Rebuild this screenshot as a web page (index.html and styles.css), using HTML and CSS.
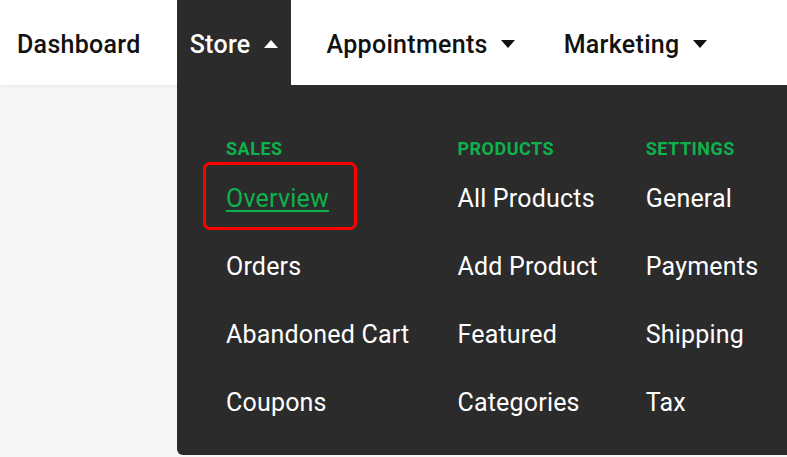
FILE: index.html
```html
<!doctype html>
<html>
<head>
<meta charset="utf-8">
<meta name="viewport" content="width=device-width, initial-scale=1">
<link rel="stylesheet" href="styles.css">
</head>
<body>
<header class="topnav">
    <nav class="topnav__list">
        <a class="topnav__item" href="#">Dashboard</a>
        <a class="topnav__item topnav__item--open" href="#">Store <span class="caret caret--up"></span></a>
        <a class="topnav__item" href="#">Appointments <span class="caret"></span></a>
        <a class="topnav__item" href="#">Marketing <span class="caret"></span></a>
    </nav>
</header>
<div class="dropdown">
    <div class="dropdown__col">
        <div class="dropdown__heading">SALES</div>
        <a class="dropdown__link dropdown__link--current" href="#">Overview</a>
        <a class="dropdown__link" href="#">Orders</a>
        <a class="dropdown__link" href="#">Abandoned Cart</a>
        <a class="dropdown__link" href="#">Coupons</a>
    </div>
    <div class="dropdown__col">
        <div class="dropdown__heading">PRODUCTS</div>
        <a class="dropdown__link" href="#">All Products</a>
        <a class="dropdown__link" href="#">Add Product</a>
        <a class="dropdown__link" href="#">Featured</a>
        <a class="dropdown__link" href="#">Categories</a>
    </div>
    <div class="dropdown__col">
        <div class="dropdown__heading">SETTINGS</div>
        <a class="dropdown__link" href="#">General</a>
        <a class="dropdown__link" href="#">Payments</a>
        <a class="dropdown__link" href="#">Shipping</a>
        <a class="dropdown__link" href="#">Tax</a>
    </div>
</div>
</body>
</html>
```

FILE: styles.css
```css
body {
    font-family: Roboto, "Liberation Sans", sans-serif;
    margin: 0;
    height: 457px;
    overflow: hidden;
    background-color: #f5f6f7;
    position: relative;
}
.topnav {
    height: 85px;
    background-color: white;
    box-shadow: 0 1px 3px rgba(0, 0, 0, 0.08);
    position: relative;
    z-index: 1;
}
.topnav__list {
    display: flex;
    height: 100%;
    padding-left: 4px;
    gap: 23px;
}
.topnav__item {
    display: flex;
    align-items: center;
    gap: 13px;
    padding: 0 13px;
    padding-top: 3px;
    font-size: 25px;
    font-weight: 500;
    letter-spacing: 0.3px;
    color: #111;
    text-decoration: none;
}
.topnav__item--open {
    background-color: #2b2b2b;
    color: white;
}
.caret {
    width: 0;
    height: 0;
    border-left: 7px solid transparent;
    border-right: 7px solid transparent;
    border-top: 8px solid #111;
}
.caret--up {
    border-top: 0;
    border-bottom: 8px solid white;
}
.dropdown {
    position: absolute;
    top: 85px;
    left: 177px;
    right: -20px;
    height: 370px;
    box-sizing: border-box;
    background-color: #2b2b2b;
    border-bottom-left-radius: 6px;
    padding: 54px 0 0 49px;
    display: flex;
    gap: 48px;
    z-index: 2;
}
.dropdown__col {
    display: flex;
    flex-direction: column;
    align-items: flex-start;
}
.dropdown__heading {
    font-size: 18px;
    font-weight: 700;
    line-height: 20px;
    letter-spacing: 0.5px;
    color: #0db24c;
    margin-bottom: 6px;
}
.dropdown__link {
    font-size: 25px;
    letter-spacing: 0.2px;
    line-height: 68px;
    color: white;
    text-decoration: none;
    position: relative;
}
.dropdown__link--current {
    color: #0db24c;
    text-decoration: underline;
    text-decoration-thickness: 2px;
    text-underline-offset: 3px;
}
.dropdown__link--current::after {
    content: '';
    position: absolute;
    left: -23px;
    right: -28px;
    top: -3px;
    bottom: 3px;
    border: 3px solid #f00;
    border-radius: 7px;
}
```
